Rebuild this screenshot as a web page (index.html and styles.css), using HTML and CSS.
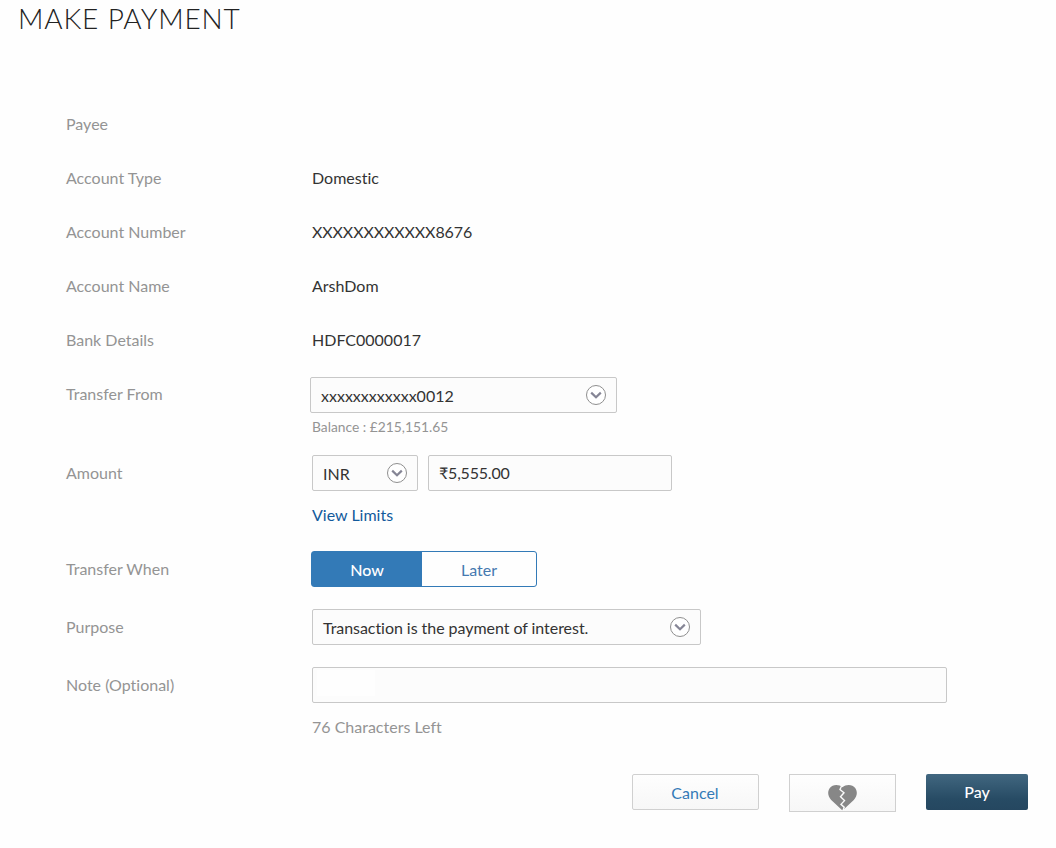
FILE: index.html
```html
<!DOCTYPE html>
<html lang="en"><head><meta charset="utf-8"><title>Make Payment</title><link rel="stylesheet" href="styles.css"></head>
<body>
<svg class="defs" width="0" height="0"><symbol id="chev" viewBox="0 0 22 22"><circle cx="11" cy="11" r="9.5" fill="#fff" stroke="#8f8f8f" stroke-width="1"/><path d="M6.2 8.600 11 13.200 15.800 8.600" fill="none" stroke="#858595" stroke-width="2.200"/></symbol></svg>
<h1 class="title">MAKE PAYMENT</h1>
<main class="form">
<div class="row"><span class="label">Payee</span></div>
<div class="row"><span class="label">Account Type</span><span>Domestic</span></div>
<div class="row"><span class="label">Account Number</span><span class="number">XXXXXXXXXXXX8676</span></div>
<div class="row"><span class="label">Account Name</span><span>ArshDom</span></div>
<div class="row"><span class="label">Bank Details</span><span>HDFC0000017</span></div>
<div class="row from"><span class="label">Transfer From</span><div><div class="field account">xxxxxxxxxxxx0012<svg class="chev"><use href="#chev"/></svg></div><div class="balance">Balance : £215,151.65</div></div></div>
<div class="row amount"><span class="label">Amount</span><div><div class="pair"><div class="field currency">INR<svg class="chev"><use href="#chev"/></svg></div><div class="field sum">₹5,555.00</div></div><a class="limits">View Limits</a></div></div>
<div class="row when"><span class="label">Transfer When</span><div class="toggle"><span class="now">Now</span><span class="later">Later</span></div></div>
<div class="row purpose"><span class="label">Purpose</span><div class="field reason">Transaction is the payment of interest.<svg class="chev"><use href="#chev"/></svg></div></div>
<div class="row note"><span class="label">Note (Optional)</span><div><div class="field memo"><span class="entry"></span></div><div class="left">76 Characters Left</div></div></div>
</main>
<footer class="actions"><button class="btn cancel">Cancel</button><button class="btn heart"><svg width="29" height="26" viewBox="0 0 29 26"><path d="M14.500 2.200C11-.9 4.500-.8 1.800 3-.8 6.800-.2 11.500 3.200 15L14.500 25.500 25.800 15C29.200 11.500 29.800 6.800 27.200 3 24.500-.8 18-.9 14.500 2.200Z" fill="#878787"/><path d="m14 0-2 4.500 4 3.300-3.500 4 4 3.800-3.500 3.800 3.200 2.800-1.500 4" fill="none" stroke="#fafafa" stroke-width="1.400"/></svg></button><button class="btn pay">Pay</button></footer>
</body></html>
```
FILE: styles.css
```css
* { box-sizing: border-box; }
body { margin: 0; width: 1056px; height: 848px; overflow: hidden; background: #fefefe; color: #333; font: 16px/20px Lato, sans-serif; font-variant-ligatures: none; }
.defs { display: block; }
.title { margin: 0; padding: 0 0 0 18px; height: 114px; font-size: 28px; line-height: 36px; font-weight: 300; letter-spacing: .85px; color: #222; }
.form { padding-left: 66px; }
.row { display: grid; grid-template-columns: 246px 1fr; height: 54px; align-items: start; }
.label, .left, .balance { color: #949494; }
.number { letter-spacing: -.1px; }
.field { display: flex; align-items: center; justify-content: space-between; height: 36px; padding: 2px 9px 0 10px; border: 1px solid #c8c8c8; border-radius: 2px; background: #fcfcfc; }
.chev { width: 22px; height: 22px; margin-top: -2px; }
.from { height: 79px; }
.account { width: 307px; margin: -7px 0 0 -2px; }
.balance { font-size: 13.8px; line-height: 18px; margin-top: 5px; }
.amount { height: 96px; }
.pair { display: flex; gap: 10px; margin-top: -8px; }
.currency { width: 106px; }
.sum { width: 244px; padding-top: 0; letter-spacing: -.2px; }
.limits { display: block; margin-top: 14px; color: #125a9c; }
.when, .purpose { height: 58px; }
.toggle { display: flex; width: 226px; height: 36px; margin: -8px 0 0 -1px; border: 1px solid #337ab7; border-radius: 3px; line-height: 36px; text-align: center; color: #4579b0; }
.now { width: 110px; background: #337ab7; color: #fff; font-weight: 500; }
.later { flex: 1; }
.reason { width: 389px; margin-top: -8px; letter-spacing: -.05px; }
.memo { width: 635px; margin-top: -8px; padding: 2px 4px; align-items: flex-start; }
.entry { width: 58px; height: 26px; background: #fefefe; }
.left { margin-top: 14px; }
.note { height: 99px; }
.actions { display: flex; justify-content: flex-end; gap: 30px; padding-right: 28px; }
.btn { height: 36px; padding: 2px 0 0; border: 1px solid #d0d0d0; border-radius: 2px; background: linear-gradient(#fefefe, #f7f7f7); font: inherit; color: #337ab7; }
.cancel { width: 127px; padding-right: 1px; }
.heart { width: 107px; height: 38px; padding: 8px 0 0; border-radius: 0; }
.heart svg { display: block; margin: 2px auto 0; }
.pay { width: 102px; padding: 0; border: 0; color: #fff; font-weight: 500; background: linear-gradient(#416780, #274b64 70%, #254760); }
```
